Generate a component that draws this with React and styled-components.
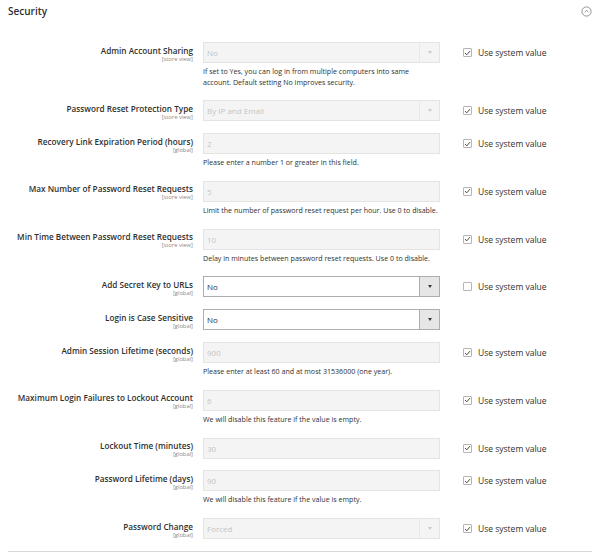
import React from 'react';
import styled, { createGlobalStyle } from 'styled-components';

// Security config section

const GlobalStyle = createGlobalStyle`
  body {
    margin: 0;
    background: #fff;
    font-family: 'Open Sans', 'Liberation Sans', sans-serif;
    color: #303030;
  }
`;

const fields = [
  {
    label: 'Admin Account Sharing',
    scope: '[store view]',
    type: 'select',
    value: 'No',
    disabled: true,
    comment: 'If set to Yes, you can log in from multiple computers into same\naccount. Default setting No improves security.',
  },
  { label: 'Password Reset Protection Type', scope: '[store view]', type: 'select', value: 'By IP and Email', disabled: true },
  {
    label: 'Recovery Link Expiration Period (hours)',
    scope: '[global]',
    type: 'text',
    value: '2',
    disabled: true,
    comment: 'Please enter a number 1 or greater in this field.',
  },
  {
    label: 'Max Number of Password Reset Requests',
    scope: '[store view]',
    type: 'text',
    value: '5',
    disabled: true,
    comment: 'Limit the number of password reset request per hour. Use 0 to disable.',
  },
  {
    label: 'Min Time Between Password Reset Requests',
    scope: '[store view]',
    type: 'text',
    value: '10',
    disabled: true,
    comment: 'Delay in minutes between password reset requests. Use 0 to disable.',
  },
  { label: 'Add Secret Key to URLs', scope: '[global]', type: 'select', value: 'No', disabled: false, useSystem: false },
  { label: 'Login is Case Sensitive', scope: '[global]', type: 'select', value: 'No', disabled: false, noSystem: true },
  {
    label: 'Admin Session Lifetime (seconds)',
    scope: '[global]',
    type: 'text',
    value: '900',
    disabled: true,
    comment: 'Please enter at least 60 and at most 31536000 (one year).',
  },
  {
    label: 'Maximum Login Failures to Lockout Account',
    scope: '[global]',
    type: 'text',
    value: '6',
    disabled: true,
    comment: 'We will disable this feature if the value is empty.',
  },
  { label: 'Lockout Time (minutes)', scope: '[global]', type: 'text', value: '30', disabled: true },
  {
    label: 'Password Lifetime (days)',
    scope: '[global]',
    type: 'text',
    value: '90',
    disabled: true,
    comment: 'We will disable this feature if the value is empty.',
  },
  { label: 'Password Change', scope: '[global]', type: 'select', value: 'Forced', disabled: true },
];

function CollapseIcon() {
  return (
    <svg width="11" height="11" viewBox="0 0 11 11">
      <circle cx="5.5" cy="5.5" r="4.6" fill="none" stroke="#7a7a7a" strokeWidth="0.8" />
      <path d="M3.6 6.3 L5.5 4.4 L7.4 6.3" fill="none" stroke="#7a7a7a" strokeWidth="0.8" />
    </svg>
  );
}

function Checkbox({ checked }) {
  return (
    <Box>
      {checked && (
        <svg width="7" height="6" viewBox="0 0 7 6">
          <path d="M1 3.1 L2.8 4.8 L6 1.1" fill="none" stroke="#4a4a4a" strokeWidth="1" />
        </svg>
      )}
    </Box>
  );
}

function Field({ field }) {
  if (field.type === 'select') {
    return (
      <Select $disabled={field.disabled}>
        <FieldValue>{field.value}</FieldValue>
        <Arrow $disabled={field.disabled}>
          <Triangle $disabled={field.disabled} />
        </Arrow>
      </Select>
    );
  }
  return (
    <Input $disabled={field.disabled}>
      <FieldValue>{field.value}</FieldValue>
    </Input>
  );
}

function App() {
  return (
    <Container>
      <GlobalStyle />
      <Header>
        <Title>Security</Title>
        <CollapseIcon />
      </Header>
      <Rows>
        {fields.map((f) => (
          <Row key={f.label}>
            <LabelCell>
              <Label>{f.label}</Label>
              <Scope>{f.scope}</Scope>
            </LabelCell>
            <ValueCell>
              <Field field={f} />
              {f.comment && <Comment>{f.comment}</Comment>}
            </ValueCell>
            {!f.noSystem && (
              <SystemCell>
                <Checkbox checked={f.useSystem !== false} />
                <SystemText>Use system value</SystemText>
              </SystemCell>
            )}
          </Row>
        ))}
      </Rows>
    </Container>
  );
}

const Container = styled.div`
  width: 600px;
  height: 554px;
  padding: 0 8px;
  box-sizing: border-box;
  display: flex;
  flex-direction: column;
`;

const Header = styled.div`
  display: flex;
  justify-content: space-between;
  align-items: center;
  height: 22px;
  padding-right: 0;
`;

const Title = styled.div`
  font-size: 10px;
  font-weight: 600;
  color: #303030;
`;

const Rows = styled.div`
  display: flex;
  flex-direction: column;
  gap: 11.8px;
  padding-top: 20px;
  padding-bottom: 12px;
  border-bottom: 1px solid #d8d8d8;
`;

const Row = styled.div`
  display: grid;
  grid-template-columns: 195px 237px 1fr;
  align-items: start;
`;

const LabelCell = styled.div`
  padding-right: 10px;
  text-align: right;
  padding-top: 3.5px;
`;

const Label = styled.div`
  font-size: 8.2px;
  font-weight: 600;
  line-height: 10px;
  color: #303030;
`;

const Scope = styled.div`
  font-size: 5.8px;
  line-height: 7px;
  color: #8a8a8a;
`;

const ValueCell = styled.div`
  display: flex;
  flex-direction: column;
`;

const Input = styled.div`
  height: 21px;
  box-sizing: border-box;
  border: 1px solid ${(p) => (p.$disabled ? '#e4e4e4' : '#adadad')};
  background: ${(p) => (p.$disabled ? '#f4f4f4' : '#fff')};
  color: ${(p) => (p.$disabled ? '#c4c4c4' : '#303030')};
  display: flex;
  align-items: center;
`;

const Select = styled(Input)`
  justify-content: space-between;
`;

const FieldValue = styled.span`
  font-size: 8px;
  padding-left: 3px;
`;

const Arrow = styled.div`
  width: 20px;
  height: 100%;
  box-sizing: border-box;
  border-left: 1px solid ${(p) => (p.$disabled ? '#e8e8e8' : '#adadad')};
  background: ${(p) => (p.$disabled ? '#f4f4f4' : '#e6e6e6')};
  display: flex;
  align-items: center;
  justify-content: center;
`;

const Triangle = styled.div`
  width: 0;
  height: 0;
  border-left: 2.5px solid transparent;
  border-right: 2.5px solid transparent;
  border-top: 3px solid ${(p) => (p.$disabled ? '#c8c8c8' : '#41362f')};
`;

const Comment = styled.div`
  margin-top: 3px;
  padding-bottom: 1.5px;
  font-size: 7.1px;
  line-height: 10.5px;
  color: #303030;
  white-space: pre-line;
`;

const SystemCell = styled.div`
  display: flex;
  align-items: center;
  gap: 6px;
  height: 21px;
  padding-left: 23px;
`;

const Box = styled.div`
  width: 9px;
  height: 9px;
  box-sizing: border-box;
  border: 1px solid #b5b5b5;
  border-radius: 1px;
  background: #fff;
  display: flex;
  align-items: center;
  justify-content: center;
`;

const SystemText = styled.span`
  font-size: 8.5px;
  color: #303030;
`;

export default App;
